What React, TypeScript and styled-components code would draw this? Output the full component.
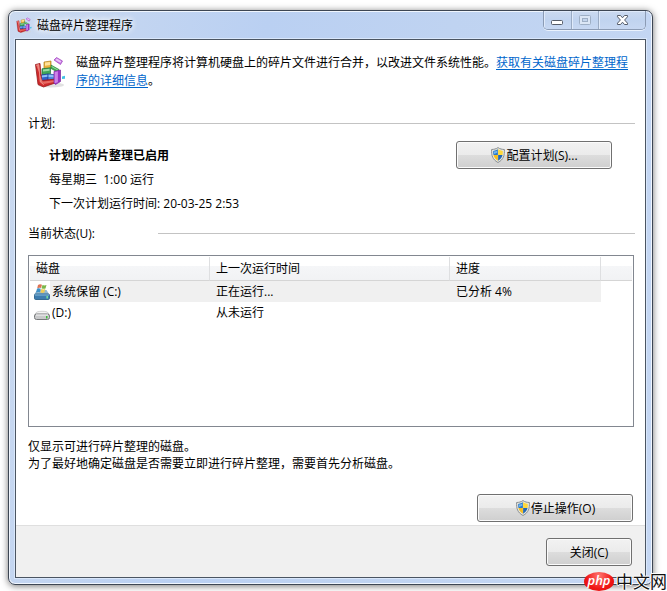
import React from "react";
import styled, { createGlobalStyle } from "styled-components";

const GlobalStyle = createGlobalStyle`
  * { box-sizing: border-box; }
  body {
    margin: 0;
    overflow: hidden;
    background: #fff;
    color: #000;
    font: 12px/17px "Open Sans", "Noto Sans CJK SC", sans-serif;
  }
  h1, h2, p { margin: 0; font: inherit; }
`;

const Page = styled.div`
  position: relative;
  padding: 10px 14px 6px 8px;
`;

const Window = styled.main`
  padding: 0 6px 6px;
  border: 1px solid #3d4653;
  border-radius: 7px;
  background: linear-gradient(100deg, #cbdaf0 0, #bad0f2 35%, #bfd3f1 60%, #c5d7f3 100%);
  box-shadow: inset 0 0 0 1px #f0f6fe, 0 1px 7px rgba(0, 0, 0, 0.55);
`;

const TitleBar = styled.header`
  display: flex;
  align-items: center;
  gap: 5px;
  height: 28px;
  padding-left: 1px;
`;

const Title = styled.h1`
  flex: 1;
  text-shadow: 0 0 6px #fff, 0 0 6px #fff;
`;

const CaptionGroup = styled.div`
  display: flex;
  align-self: flex-start;
  height: 19px;
  border: 1px solid #8b9bb4;
  border-top: 0;
  border-radius: 0 0 5px 5px;
  overflow: hidden;
  box-shadow: 0 1px 0 #eaf2fd;
`;

const CaptionButton = styled.button<{ $wide?: boolean }>`
  display: grid;
  place-items: center;
  width: ${(p) => (p.$wide ? 47 : 27)}px;
  padding: 0;
  border: 0;
  background: linear-gradient(#cbdaf0, #c0d3ef 50%, #c7d8f2);
  box-shadow: inset 1px 1px 0 #dfeafa;
  & + & { border-left: 1px solid #9aabc4; }
`;

const Client = styled.div`
  border: 1px solid #4b5562;
  background: #fff;
  box-shadow: 0 0 0 1px #d9e7fb;
`;

const Body = styled.div`
  padding: 14px 10px 3px 12px;
`;

const Intro = styled.div`
  display: flex;
  align-items: center;
  gap: 10px;
  padding-left: 6px;
  line-height: 18px;
  & > svg { flex: none; }
`;

const Link = styled.a`
  color: #0066cc;
  text-decoration: underline;
  text-underline-offset: 2px;
`;

const SectionHeading = styled.div<{ $label: number }>`
  display: grid;
  grid-template-columns: ${(p) => p.$label}px 1fr;
  align-items: center;
  &::after {
    content: "";
    height: 1px;
    background: #c3c3c3;
  }
`;

const Schedule = styled.section`
  margin-top: 25px;
`;

const ScheduleRow = styled.div`
  display: flex;
  justify-content: space-between;
  align-items: flex-start;
  padding: 9px 23px 13px 21px;
`;

const ScheduleLines = styled.div`
  display: grid;
  gap: 7px;
  padding-top: 6px;
  white-space: pre;
`;

const Strong = styled.strong`
  font-weight: 700;
`;

const PushButton = styled.button<{ $small?: boolean }>`
  display: flex;
  align-items: center;
  justify-content: center;
  width: ${(p) => (p.$small ? 86 : 156)}px;
  height: 28px;
  padding: 0;
  border: 1px solid #707070;
  border-radius: 3px;
  background: linear-gradient(#f2f2f2, #ebebeb 50%, #dddddd 50%, #cfcfcf);
  box-shadow: inset 0 0 0 1px #fbfbfb;
  color: #000;
  font: inherit;
`;

const Status = styled.section``;

const ListBox = styled.div`
  min-height: 172px;
  margin: 13px 1px 0 0;
  padding: 1px;
  border: 1px solid #828790;
`;

const DiskTable = styled.table`
  width: 100%;
  table-layout: fixed;
  border-collapse: separate;
  border-spacing: 0;
`;

const Col = styled.col<{ $w?: number }>`
  width: ${(p) => (p.$w ? `${p.$w}px` : "auto")};
`;

const HeadCell = styled.th`
  height: 24px;
  padding: 0 6px;
  border-right: 1px solid #dedfe1;
  border-bottom: 1px solid #d5d5d5;
  background: linear-gradient(#fff 40%, #f5f6f8 40%, #f1f2f4);
  font-weight: 400;
  text-align: left;
  &:last-child { border-right: 0; }
`;

const Cell = styled.td<{ $selected?: boolean }>`
  height: 21px;
  padding: 0 6px;
  background: ${(p) => (p.$selected ? "#f0f0f0" : "transparent")};
`;

const DiskCell = styled(Cell)`
  padding: 0 0 0 4px;
  background: ${(p) =>
    p.$selected ? "linear-gradient(90deg, #fff 20px, #f0f0f0 20px)" : "transparent"};
`;

const DiskName = styled.div`
  display: flex;
  align-items: center;
  gap: 2px;
`;

const Notes = styled.div`
  margin-top: 11px;
`;

const Actions = styled.div`
  display: flex;
  justify-content: flex-end;
  margin-top: 22px;
  padding-right: 2px;
`;

const Footer = styled.footer`
  display: flex;
  justify-content: flex-end;
  padding: 12px 13px 11px;
  border-top: 1px solid #dfdfdf;
  background: #f0f0f0;
`;

const Brand = styled.div`
  position: absolute;
  right: 0;
  bottom: 0;
  display: flex;
  align-items: center;
  gap: 2px;
  height: 20px;
`;

const BrandBadge = styled.span`
  width: 30px;
  height: 19px;
  border-radius: 50%;
  background: radial-gradient(ellipse at 50% 20%, #ff7770, #f01616 60%, #dc0808);
  color: #fff;
  font: italic 600 13px/16px "Open Sans", sans-serif;
  text-align: center;
`;

const BrandName = styled.span`
  color: #111;
  font: 400 17px/20px "Noto Sans CJK SC", sans-serif;
  text-shadow: 1px 0 #fff, -1px 0 #fff, 0 1px #fff, 0 -1px #fff;
`;

const DefragIcon = ({ size }: { size: number }) => (
  <svg width={size} height={size} viewBox="0 0 32 32" aria-hidden="true">
    <ellipse cx="17" cy="29" rx="13" ry="2.5" fill="#d4d4d4" opacity=".7" />
    <path d="m10 6 7-1v7l-7 1z" fill="#e9b23c" stroke="#b07f1e" strokeWidth=".7" />
    <path d="m11 6.600 5-.7v3l-5 .8z" fill="#ffe29a" />
    <path d="m8 12.800 8.500-1v6l-8.500 1z" fill="#3fa65a" stroke="#20733a" strokeWidth=".7" />
    <path d="m9 13.500 6.500-.8v2l-6.500.9z" fill="#9bdca4" />
    <path d="m17 9 8 4.500v3.500l-8-4.500z" fill="#3fae52" stroke="#257b32" strokeWidth=".6" />
    <path d="m17.600 10 6.800 3.900v.9l-6.800-3.800z" fill="#a2e0a8" />
    <path d="m7 19 7-1v6.500l-7 1z" fill="#2f5fca" stroke="#1c3f99" strokeWidth=".7" />
    <path d="m14 18 6.500.7V25L14 26z" fill="#4787de" stroke="#224b9c" strokeWidth=".7" />
    <path d="m7.600 19.600 5.800-.8v2l-5.800.8zM14.600 18.800l5.300.5v2l-5.300-.3z" fill="#8fc0f6" />
    <path d="M1.500 8.500 6 7.500l1.500 17 15-1.500 1.500 3L9.500 31 4 28.500z" fill="#cf2a2b" stroke="#971a1d" strokeWidth=".8" />
    <path d="M2.300 9.200 4.800 8.600l1.400 17.200 3.600 3" fill="#e8746c" stroke="#f3aaa4" strokeWidth=".7" />
    <path d="m8 25.700 14-1.700.8 1.400L9.800 28z" fill="#e66a62" />
    <path d="m20 15.500 6.500-1.500v11.500L21.500 28.500 20 27z" fill="#9932c4" stroke="#7a249b" strokeWidth=".7" />
    <path d="m20.600 16 3.300-.8v11l-3.300 1z" fill="#cc84e8" />
    <path d="m20 4 2.500-2.500L28.500 5 26.500 8.500z" fill="#c676e4" stroke="#9e43ba" strokeWidth=".7" />
    <path d="m21.300 4 1.500-1.500L27.300 5.200l-1 1.500z" fill="#ecc7f7" />
    <path d="m28 20.500 3-.8v3l-3 .3z" fill="#43c2e5" />
  </svg>
);

const Shield = () => (
  <svg width="16" height="16" viewBox="0 0 16 16" aria-hidden="true">
    <path d="M8 .6C6 2 4 2.400 1.600 2.500c-.2 6 .8 10 6.400 13 5.600-3 6.600-7 6.400-13C12 2.400 10 2 8 .6z" fill="#e6e6e0" stroke="#8a8f91" />
    <path d="M7.900 2.300C6.500 3.200 5 3.700 3.200 3.900c-.1 1.500 0 2.900.3 4.200h4.400z" fill="#2c79c9" />
    <path d="M8.100 2.300c1.400.9 2.900 1.400 4.700 1.600.1 1.500 0 2.900-.3 4.200H8.100z" fill="#ffd83b" />
    <path d="M3.500 8.100h4.400v5.700c-2.500-1.400-3.800-3.200-4.400-5.700z" fill="#f6bd1b" />
    <path d="M8.100 8.100h4.400c-.6 2.500-1.900 4.300-4.400 5.700z" fill="#2468b4" />
    <path d="M4 4.500c1.400-.2 2.500-.6 3.300-1.100v2.300L4 7z" fill="#72b6ee" />
  </svg>
);

const SystemDisk = () => (
  <svg width="16" height="18" viewBox="0 0 16 18" aria-hidden="true">
    <path d="m2.500 8 2-1h8l2.500 4H.5z" fill="#91b8d2" />
    <rect x=".5" y="11" width="15" height="5.500" rx="1.200" fill="#3d7caf" stroke="#376b93" />
    <path d="M1 11.500h14v1H1z" fill="#87badb" />
    <path d="M4 2c1.500-1 2.700-.8 4-.2L7 5c-1.300-.5-2.500-.5-3.800.2z" fill="#dc7355" />
    <path d="M8.500 2c1.400.6 2.500.7 4 0l-1 3.400c-1.400.6-2.600.4-4-.2z" fill="#7bb64a" />
    <path d="M3 5.800c1.300-.7 2.500-.6 3.800 0l-1 3.500c-1.300-.6-2.600-.5-3.800.1z" fill="#3e91c9" />
    <path d="M7.300 6c1.400.6 2.600.7 4 .1l-1 3.400c-1.400.6-2.600.5-4-.1z" fill="#edcb58" />
    <path d="M12.500 13h1.300v2.500h-1.300z" fill="#7ef098" />
  </svg>
);

const Disk = () => (
  <svg width="16" height="16" viewBox="0 0 16 16" aria-hidden="true">
    <path d="m.8 9.500 2-2.500c3-1 7.500-1 10.500 0l2 2.500z" fill="#f4f4f4" stroke="#c2c2c2" strokeWidth=".7" />
    <rect x=".5" y="9" width="15" height="5.500" rx="2" fill="#c8c9ca" stroke="#77797b" />
    <path d="M2 10h12" stroke="#f8f8f8" />
    <path d="M12 11h1.500v2.500H12z" fill="#3bbb38" />
  </svg>
);

const MinimizeGlyph = () => (
  <svg width="13" height="13" viewBox="0 0 13 13" aria-hidden="true">
    <rect x=".5" y="6.500" width="11" height="4" rx="1" fill="#fff" stroke="#555c68" />
  </svg>
);

const MaximizeGlyph = () => (
  <svg width="13" height="11" viewBox="0 0 13 11" aria-hidden="true">
    <rect x=".5" y=".5" width="11" height="9" rx="1" fill="#dbe6f5" stroke="#9eafc5" />
    <rect x="3.500" y="3.500" width="5" height="3" fill="#c4d5ed" stroke="#9eafc5" />
  </svg>
);

const CloseGlyph = () => (
  <svg width="13" height="12" viewBox="0 0 13 12" aria-hidden="true">
    <path
      d="M1.500 1.500h3l2 2.300 2-2.300h3v1.300L8.600 6l2.900 3.200v1.300h-3l-2-2.300-2 2.300h-3V9.200L4.400 6 1.500 2.800z"
      fill="#fff"
      stroke="#555c68"
    />
  </svg>
);

const disks = [
  { name: "系统保留 (C:)", lastRun: "正在运行...", progress: "已分析 4%", system: true },
  { name: "(D:)", lastRun: "从未运行", progress: "", system: false },
];

export default function App() {
  return (
    <>
      <GlobalStyle />
      <Page>
        <Window>
          <TitleBar>
            <DefragIcon size={16} />
            <Title>磁盘碎片整理程序</Title>
            <CaptionGroup>
              <CaptionButton aria-label="最小化"><MinimizeGlyph /></CaptionButton>
              <CaptionButton aria-label="最大化" disabled><MaximizeGlyph /></CaptionButton>
              <CaptionButton aria-label="关闭" $wide><CloseGlyph /></CaptionButton>
            </CaptionGroup>
          </TitleBar>
          <Client>
            <Body>
              <Intro>
                <DefragIcon size={32} />
                <p>
                  磁盘碎片整理程序将计算机硬盘上的碎片文件进行合并，以改进文件系统性能。<Link href="#details">获取有关磁盘碎片整理程序的详细信息</Link>。
                </p>
              </Intro>
              <Schedule>
                <SectionHeading $label={62}><h2>计划:</h2></SectionHeading>
                <ScheduleRow>
                  <ScheduleLines>
                    <Strong>计划的碎片整理已启用</Strong>
                    <p>每星期三{"  "}1:00 运行</p>
                    <p>下一次计划运行时间: 20-03-25 2:53</p>
                  </ScheduleLines>
                  <PushButton><Shield />配置计划(S)...</PushButton>
                </ScheduleRow>
              </Schedule>
              <Status>
                <SectionHeading $label={130}><h2 id="status">当前状态(U):</h2></SectionHeading>
                <ListBox>
                  <DiskTable aria-labelledby="status">
                    <colgroup>
                      <Col $w={180} />
                      <Col $w={240} />
                      <Col $w={151} />
                      <Col />
                    </colgroup>
                    <thead>
                      <tr>
                        <HeadCell>磁盘</HeadCell>
                        <HeadCell>上一次运行时间</HeadCell>
                        <HeadCell>进度</HeadCell>
                        <HeadCell />
                      </tr>
                    </thead>
                    <tbody>
                      {disks.map((d) => (
                        <tr key={d.name}>
                          <DiskCell $selected={d.system}>
                            <DiskName>{d.system ? <SystemDisk /> : <Disk />}{d.name}</DiskName>
                          </DiskCell>
                          <Cell $selected={d.system}>{d.lastRun}</Cell>
                          <Cell $selected={d.system}>{d.progress}</Cell>
                          <Cell />
                        </tr>
                      ))}
                    </tbody>
                  </DiskTable>
                </ListBox>
              </Status>
              <Notes>
                <p>仅显示可进行碎片整理的磁盘。</p>
                <p>为了最好地确定磁盘是否需要立即进行碎片整理，需要首先分析磁盘。</p>
              </Notes>
              <Actions>
                <PushButton><Shield />停止操作(O)</PushButton>
              </Actions>
            </Body>
            <Footer>
              <PushButton $small>关闭(C)</PushButton>
            </Footer>
          </Client>
        </Window>
        <Brand>
          <BrandBadge>php</BrandBadge>
          <BrandName>中文网</BrandName>
        </Brand>
      </Page>
    </>
  );
}
